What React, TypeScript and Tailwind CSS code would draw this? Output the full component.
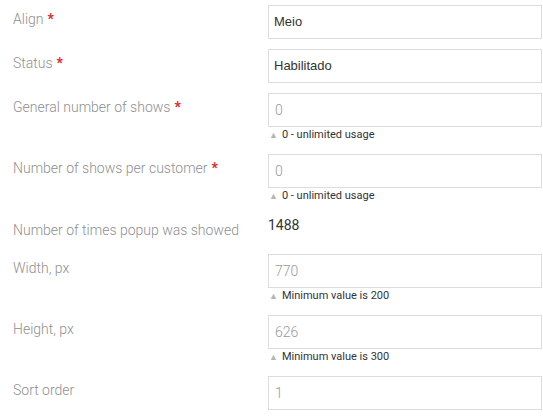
// Popup settings form fragment

const labelFont = { fontFamily: 'Roboto, "Liberation Sans", sans-serif' };

type Field = {
  label: string;
  required?: boolean;
  kind: 'select' | 'input' | 'static';
  value: string;
  hint?: string;
};

const fields: Field[] = [
  { label: 'Align', required: true, kind: 'select', value: 'Meio' },
  { label: 'Status', required: true, kind: 'select', value: 'Habilitado' },
  { label: 'General number of shows', required: true, kind: 'input', value: '0', hint: '0 - unlimited usage' },
  { label: 'Number of shows per customer', required: true, kind: 'input', value: '0', hint: '0 - unlimited usage' },
  { label: 'Number of times popup was showed', kind: 'static', value: '1488' },
  { label: 'Width, px', kind: 'input', value: '770', hint: 'Minimum value is 200' },
  { label: 'Height, px', kind: 'input', value: '626', hint: 'Minimum value is 300' },
  { label: 'Sort order', kind: 'input', value: '1' },
];

function FieldRow({ field }: { field: Field }) {
  const isStatic = field.kind === 'static';
  return (
    <div className="flex mb-[10px]">
      <div
        className={`w-[268px] shrink-0 pl-[13px] text-[14px] leading-[20px] font-light text-[#8f8f8f] ${isStatic ? 'pt-[5px]' : 'pt-[4px]'}`}
        style={labelFont}
      >
        {field.label}
        {field.required && <span className="ml-[4px] font-bold text-[#e22626]">*</span>}
      </div>
      <div className="flex-1 mr-[1px]">
        {field.kind === 'select' && (
          <div
            className="h-[34px] border border-[#ddd] bg-white px-[5px] flex items-center text-[13px] text-[#333]"
            style={{ fontFamily: '"Liberation Sans", Arial, sans-serif' }}
          >
            {field.value}
          </div>
        )}
        {field.kind === 'input' && (
          <div className="h-[34px] border border-[#ddd] bg-white px-[6px] flex items-center text-[14px] font-light text-[#999]" style={labelFont}>
            {field.value}
          </div>
        )}
        {isStatic && (
          <div className="h-[29px] text-[14px] leading-[20px] text-[#333]" style={labelFont}>
            {field.value}
          </div>
        )}
        {field.hint && (
          <div className="h-[17px] flex items-center pl-[1px] text-[11px] text-[#333]" style={labelFont}>
            <span className="text-[9px] text-[#b5b5b5] mr-[4px]">▲</span>
            {field.hint}
          </div>
        )}
      </div>
    </div>
  );
}

export default function App() {
  return (
    <div className="w-[543px] h-[418px] bg-white overflow-hidden flex flex-col">
      <div className="pt-[5px]">
        {fields.map((f) => (
          <FieldRow key={f.label} field={f} />
        ))}
      </div>
      <div className="mt-auto h-[5px] border-t-[3px] border-[#eee] bg-[#ccc]" />
    </div>
  );
}
